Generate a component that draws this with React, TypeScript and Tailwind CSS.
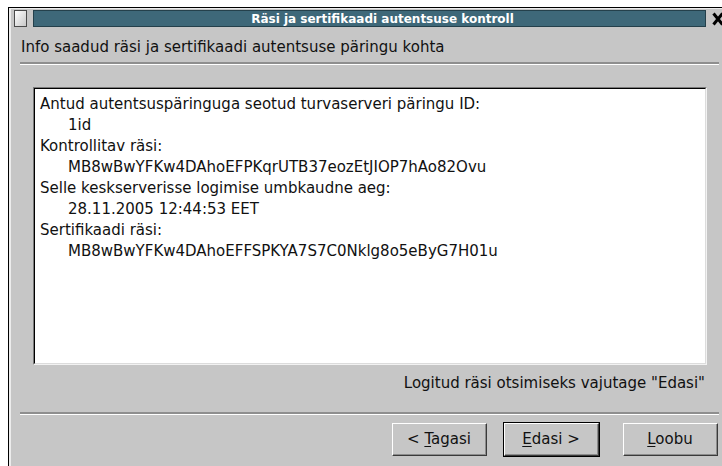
import React from "react";

const font = { fontFamily: '"DejaVu Sans", Verdana, sans-serif' };

// Raised Motif-like push button; `primary` draws the default-button frame
function PushButton({ mnemonic, before = "", after = "", primary = false }: {
  mnemonic: string; before?: string; after?: string; primary?: boolean;
}) {
  const inner = (
    <div className="w-full h-full border-t border-l border-white border-b border-r border-b-[#3a3a3a] border-r-[#3a3a3a]">
      <div className="w-full h-full flex items-center justify-center border-b border-r border-[#8c8c8c] text-[15px] text-[#111]">
        <span>
          {before}
          <span className="underline underline-offset-2">{mnemonic}</span>
          {after}
        </span>
      </div>
    </div>
  );
  if (primary) {
    return <div className="w-[97px] h-[35px] border border-black">{inner}</div>;
  }
  return <div className="w-[95px] h-[33px]">{inner}</div>;
}

const rows: { label: string; value: string }[] = [
  { label: "Antud autentsuspäringuga seotud turvaserveri päringu ID:", value: "1id" },
  { label: "Kontrollitav räsi:", value: "MB8wBwYFKw4DAhoEFPKqrUTB37eozEtJIOP7hAo82Ovu" },
  { label: "Selle keskserverisse logimise umbkaudne aeg:", value: "28.11.2005 12:44:53 EET" },
  { label: "Sertifikaadi räsi:", value: "MB8wBwYFKw4DAhoEFFSPKYA7S7C0Nklg8o5eByG7H01u" },
];

export default function App() {
  return (
    <div className="w-[722px] h-[466px] bg-white overflow-hidden pt-[7px] pl-[8px]" style={font}>
      {/* dialog window */}
      <div className="w-[760px] h-[470px] border-t border-l border-black bg-[#c6c6c6]">
        <div className="h-full border-t border-l-2 border-[#ececec] flex flex-col">
          {/* title row */}
          <div className="h-[17px] mt-[1px] flex items-stretch">
            <div className="ml-[3px] w-[13px] border border-[#4a4a4a] bg-gradient-to-br from-white to-[#c8c8c8]" />
            <div className="ml-[6px] w-[673px] bg-[#3e6879] border border-[#24404b] flex items-center justify-center pl-[26px]">
              <span className="text-white font-bold text-[12px] leading-none">
                Räsi ja sertifikaadi autentsuse kontroll
              </span>
            </div>
            <div className="ml-[6px] w-[12px] flex items-center">
              <svg width="12" height="14" viewBox="0 0 12 14">
                <path d="M1.5 1.5 L10.5 12.5 M10.5 1.5 L1.5 12.5" stroke="#000" strokeWidth="3" />
              </svg>
            </div>
          </div>

          <div className="mt-[10px] pl-[10px] text-[15px] leading-[20px] text-[#111]">
            Info saadud räsi ja sertifikaadi autentsuse päringu kohta
          </div>

          <div className="mt-[5px] ml-[9px] w-[699px] border-t-2 border-[#8e8e8e] border-b border-b-white" />

          {/* info text area */}
          <div className="mt-[22px] ml-[22px] w-[674px] h-[278px] border-t border-l border-[#7a7a7a] border-b border-r border-b-[#f2f2f2] border-r-[#f2f2f2]">
            <div className="w-full h-full bg-white border-t border-l border-black border-b border-r border-b-[#dcdcdc] border-r-[#dcdcdc] pt-[5px] pl-[5px] text-[15px] leading-[21px] text-[#111]">
              {rows.map((r) => (
                <div key={r.label}>
                  <div>{r.label}</div>
                  <div className="pl-[28px]">{r.value}</div>
                </div>
              ))}
            </div>
          </div>

          <div className="mt-[8px] ml-[22px] w-[674px] pr-[2px] text-right text-[15px] leading-[20px] text-[#111]">
            Logitud räsi otsimiseks vajutage "Edasi"
          </div>

          <div className="mt-[19px] ml-[9px] w-[699px] border-t-2 border-[#8e8e8e] border-b border-b-white" />

          {/* wizard buttons */}
          <div className="mt-[7px] h-[35px] flex items-center">
            <div className="ml-[381px]">
              <PushButton before="< " mnemonic="T" after="agasi" />
            </div>
            <div className="ml-[16px]">
              <PushButton mnemonic="E" after="dasi >" primary />
            </div>
            <div className="ml-[23px]">
              <PushButton mnemonic="L" after="oobu" />
            </div>
          </div>
        </div>
      </div>
    </div>
  );
}
